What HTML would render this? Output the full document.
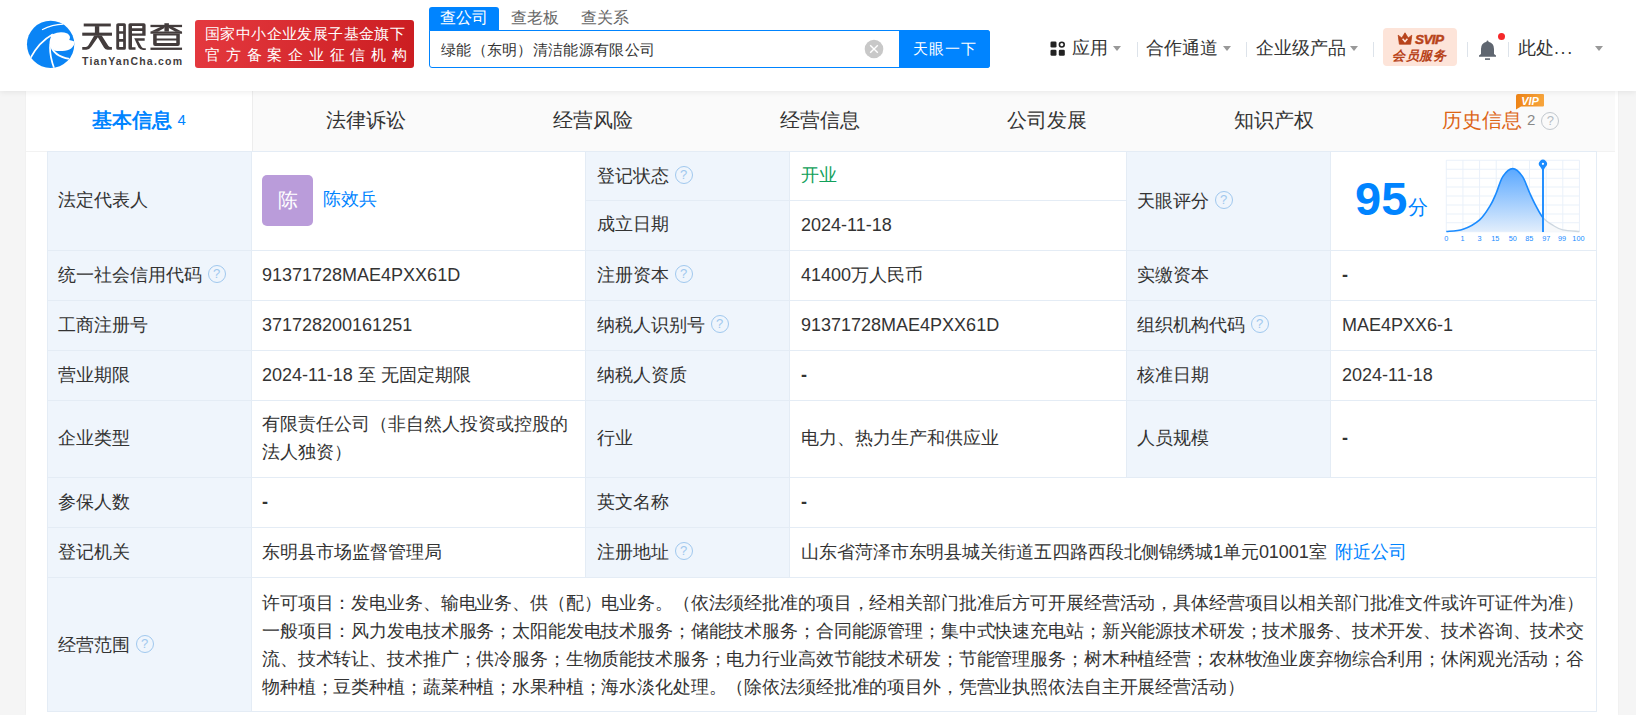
<!DOCTYPE html>
<html><head><meta charset="utf-8">
<style>
*{box-sizing:border-box;margin:0;padding:0}
html,body{width:1636px;height:715px;overflow:hidden;background:#f5f5f5;font-family:"Liberation Sans",sans-serif;color:#333}
.abs{position:absolute}
.t{white-space:nowrap}
#hdr{position:absolute;left:0;top:0;width:1636px;height:91px;background:#fff;box-shadow:0 1px 6px rgba(0,0,0,.08);z-index:5}
#cont{position:absolute;left:26px;top:91px;width:1592px;height:624px;background:#fff;box-shadow:0 0 2px rgba(0,0,0,.05)}
.tabs{position:absolute;left:0;top:0;width:1589px;height:61px;background:#fafafa;border-bottom:1px solid #f2f2f2}
.tab{position:absolute;top:0;height:60px;width:227px;text-align:center;font-size:20px;line-height:58px;color:#333}
.tab.act{background:#fff;border-left:none;width:226px;left:0;color:#0084ff;font-weight:bold}
.q{display:inline-block;width:18px;height:18px;border:1.6px solid #a0c8ee;border-radius:50%;font-size:13px;line-height:15px;text-align:center;color:#a0c8ee;vertical-align:middle;margin-left:5.5px;position:relative;top:-2px;font-weight:normal}
.caret{position:absolute;width:0;height:0;border-left:4.5px solid transparent;border-right:4.5px solid transparent;border-top:5px solid #999}
.div{position:absolute;width:1px;height:15px;background:#dde3ea;top:42px}
</style></head><body>
<div id="hdr">
  <!-- logo -->
  <svg class="abs" style="left:24px;top:16px" width="56" height="56" viewBox="0 0 715 715">
    <defs><clipPath id="lc"><circle cx="340" cy="362" r="302"/></clipPath></defs>
    <circle cx="340" cy="362" r="302" fill="#0a84f5"/>
    <g clip-path="url(#lc)" fill="none" stroke="#fff" stroke-width="22">
      <path d="M80,540 Q190,330 368,232"/>
      <path d="M230,175 Q360,110 505,105" stroke-width="16"/>
      <path d="M362,240 Q290,420 390,680"/>
      <path d="M338,360 Q370,510 580,548"/>
      <path fill="#fff" stroke="none" d="M365,232 Q470,185 555,225 Q605,260 578,305 Q620,312 650,330 C640,400 585,447 490,448 Q415,450 385,440 Q338,400 338,340 Q338,270 365,232 Z"/>
    </g>
  </svg>
  <svg class="abs" style="left:80px;top:20px" width="105" height="33" viewBox="0 0 1636 514">
<g fill="#433c3c">
<rect x="58" y="55" width="422" height="45"/>
<rect x="35" y="197" width="463" height="48"/>
<rect x="232" y="95" width="68" height="110"/>
<path d="M222,240 L298,240 L175,418 Q145,465 100,465 L35,465 L35,420 L92,420 Q115,420 132,395 Z"/>
<path d="M262,240 L338,240 L440,400 Q455,420 478,420 L497,420 L497,465 L430,465 Q395,465 375,432 Z"/>
<path fill-rule="evenodd" d="M595,50 L690,50 Q715,50 715,75 L715,440 Q715,465 690,465 L595,465 Q565,465 565,440 L565,75 Q565,50 595,50 Z M610,95 L672,95 L672,175 L610,175 Z M610,215 L672,215 L672,295 L610,295 Z M610,340 L672,340 L672,420 L610,420 Z"/>
<path fill-rule="evenodd" d="M780,50 L995,50 Q1022,50 1022,77 L1022,245 L810,245 L810,425 L865,425 L865,465 L780,465 Q755,465 755,440 L755,75 Q755,50 780,50 Z M810,92 L970,92 L970,128 L810,128 Z M810,170 L970,170 L970,210 L810,210 Z"/>
<path d="M845,283 L1008,283 L1008,322 L905,322 L958,415 Q975,440 1000,440 L1025,440 L1025,467 L985,467 Q935,467 912,430 Z"/>
<rect x="1098" y="75" width="492" height="36"/>
<path d="M1315,50 L1385,50 L1385,180 L1315,180 Z"/>
<path d="M1098,180 L1590,180 L1590,215 L1098,215 Z"/>
<path d="M1252,110 L1316,110 L1316,124 L1212,182 L1098,182 Z"/>
<path d="M1448,110 L1384,110 L1384,124 L1488,182 L1590,182 Z"/>
<path fill-rule="evenodd" d="M1140,215 L1555,215 L1555,375 Q1555,405 1525,405 L1170,405 Q1140,405 1140,375 Z M1195,240 L1500,240 L1500,290 L1195,290 Z M1195,320 L1500,320 L1500,360 L1195,360 Z"/>
<rect x="1098" y="430" width="492" height="36"/>
</g>
</svg>
  <div class="abs t" style="left:82px;top:55px;font-size:10.5px;line-height:12px;font-weight:bold;color:#433d3d;letter-spacing:1.2px">TianYanCha.com</div>
  <div class="abs" style="left:195px;top:20px;width:219px;height:48px;border-radius:3px;background:linear-gradient(100deg,#e4393f,#cb1d21);color:#fff">
    <div class="abs t" style="left:10px;top:4px;font-size:15px;line-height:20px;letter-spacing:0.4px">国家中小企业发展子基金旗下</div>
    <div class="abs t" style="left:10px;top:25px;font-size:15px;line-height:20px;letter-spacing:5.75px">官方备案企业征信机构</div>
  </div>
  <!-- search -->
  <div class="abs" style="left:429px;top:7px;width:70px;height:24px;background:#0084ff;border-radius:3px 3px 0 0;color:#fff;font-size:16px;line-height:22px;text-align:center;font-weight:500">查公司</div>
  <div class="abs t" style="left:511px;top:7px;font-size:16px;line-height:22px;color:#666">查老板</div>
  <div class="abs t" style="left:581px;top:7px;font-size:16px;line-height:22px;color:#666">查关系</div>
  <div class="abs" style="left:429px;top:30px;width:561px;height:38px;border:1px solid #0084ff;border-radius:0 3px 3px 3px;background:#fff">
    <div class="abs t" style="left:11px;top:1px;font-size:15px;line-height:36px;color:#333;letter-spacing:0.3px">绿能（东明）清洁能源有限公司</div>
    <svg class="abs" style="left:434px;top:7.5px" width="20" height="20" viewBox="0 0 20 20">
      <circle cx="10" cy="10" r="9.3" fill="#c8c8c8"/>
      <path d="M6.2,6.2 L13.8,13.8 M13.8,6.2 L6.2,13.8" stroke="#fff" stroke-width="1.4"/>
    </svg>
    <div class="abs" style="left:469px;top:-1px;width:91px;height:38px;background:#0084ff;border-radius:0 3px 3px 0;color:#fff;font-size:15px;line-height:37px;text-align:center;letter-spacing:0.8px;text-indent:0.8px">天眼一下</div>
  </div>
  <!-- right nav -->
  <svg class="abs" style="left:1050px;top:41px" width="16" height="16" viewBox="0 0 16 16">
    <rect x="0.5" y="0.5" width="6" height="6" rx="1.3" fill="#222"/>
    <circle cx="11.8" cy="3.6" r="2.4" fill="none" stroke="#222" stroke-width="1.6"/>
    <rect x="0.5" y="8.8" width="6" height="6" rx="1.3" fill="#222"/>
    <rect x="8.8" y="8.8" width="6" height="6" rx="1.3" fill="#222"/>
  </svg>
  <div class="abs t" style="left:1072px;top:36px;font-size:18px;line-height:24px;color:#333">应用</div>
  <div class="caret" style="left:1113px;top:46px"></div>
  <div class="div" style="left:1137px"></div>
  <div class="abs t" style="left:1146px;top:36px;font-size:18px;line-height:24px;color:#333">合作通道</div>
  <div class="caret" style="left:1223px;top:46px"></div>
  <div class="div" style="left:1246px"></div>
  <div class="abs t" style="left:1256px;top:36px;font-size:18px;line-height:24px;color:#333">企业级产品</div>
  <div class="caret" style="left:1350px;top:46px"></div>
  <div class="div" style="left:1373px"></div>
  <div class="abs" style="left:1383px;top:28px;width:74px;height:38px;border-radius:4px;background:#fde4d9;color:#b8431a">
    <svg class="abs" style="left:14px;top:4px" width="16" height="13" viewBox="0 0 16 13">
      <path d="M1.2,3.2 L4.8,6 L8,0.8 L11.2,6 L14.8,3.2 L13.6,12.2 L2.4,12.2 Z" fill="#b8431a" stroke="#b8431a" stroke-width="0.8" stroke-linejoin="round"/>
      <path d="M5.6,6.8 L8,9.6 L10.4,6.8" fill="none" stroke="#fde4d9" stroke-width="1.5"/>
    </svg>
    <div class="abs t" style="left:32px;top:3px;font-size:13.5px;line-height:17px;font-weight:bold;font-style:italic;letter-spacing:-0.6px;-webkit-text-stroke:0.5px #b8431a">SVIP</div>
    <div class="abs t" style="left:9px;top:19px;font-size:13px;line-height:17px;font-weight:bold;font-style:italic;letter-spacing:0.6px">会员服务</div>
  </div>
  <div class="div" style="left:1467px"></div>
  <svg class="abs" style="left:1478px;top:39px" width="20" height="22" viewBox="0 0 20 22">
    <path d="M9.5,1.5 Q10.5,1.5 10.5,2.8 Q16,4 16,10 L16,15 L18,16.5 L18,17.8 L1,17.8 L1,16.5 L3,15 L3,10 Q3,4 8.5,2.8 Q8.5,1.5 9.5,1.5 Z" fill="#5f6670"/>
    <rect x="7" y="19.3" width="5" height="1.6" fill="#5f6670"/>
  </svg>
  <div class="abs" style="left:1498px;top:33px;width:7px;height:7px;border-radius:50%;background:#f5282a"></div>
  <div class="div" style="left:1508px"></div>
  <div class="abs t" style="left:1518px;top:36px;font-size:18px;line-height:24px;color:#333">此处<span style="letter-spacing:1.6px">...</span></div>
  <div class="caret" style="left:1595px;top:46px"></div>
</div>
<div id="cont">
  <div class="tabs">
    <div class="tab act">基本信息 <span style="font-size:15px;font-weight:normal;position:relative;top:-2px">4</span></div>
    <div class="tab" style="left:226px;border-left:1px solid #ededed">法律诉讼</div>
    <div class="tab" style="left:453px">经营风险</div>
    <div class="tab" style="left:680px">经营信息</div>
    <div class="tab" style="left:907px">公司发展</div>
    <div class="tab" style="left:1134px">知识产权</div>
    <div class="tab" style="left:1361px;color:#dd6516">历史信息 <span style="font-size:15px;color:#888;position:relative;top:-2px">2</span><span class="q" style="border:1.7px solid #c2c8ce;color:#b5bcc3;margin-left:6px;top:-1px">?</span></div>
  </div>
  <svg class="abs" style="left:1490px;top:3px" width="29" height="18" viewBox="0 0 29 18">
    <defs><linearGradient id="vg" x1="0" x2="1"><stop offset="0" stop-color="#ee8417"/><stop offset="1" stop-color="#f7a53c"/></linearGradient></defs>
    <path d="M2,0 L27,0 Q28,0 28,1 L28,11.5 Q28,12.5 27,12.5 L5,12.5 L0,15.5 L0,2 Q0,0 2,0 Z" fill="url(#vg)"/>
    <text x="14" y="10.5" text-anchor="middle" font-family="Liberation Sans" font-size="11" font-weight="bold" font-style="italic" fill="#fff">VIP</text>
  </svg>
</div>
<div class="abs" style="left:47px;top:151px;width:204px;height:560px;background:#eff5fc"></div>
<div class="abs" style="left:585px;top:151px;width:204px;height:426px;background:#eff5fc"></div>
<div class="abs" style="left:1126px;top:151px;width:204px;height:326px;background:#eff5fc"></div>
<div class="abs" style="left:47px;top:151px;width:1px;height:561px;background:#e4ecf5"></div>
<div class="abs" style="left:251px;top:151px;width:1px;height:561px;background:#e4ecf5"></div>
<div class="abs" style="left:585px;top:151px;width:1px;height:427px;background:#e4ecf5"></div>
<div class="abs" style="left:789px;top:151px;width:1px;height:427px;background:#e4ecf5"></div>
<div class="abs" style="left:1126px;top:151px;width:1px;height:327px;background:#e4ecf5"></div>
<div class="abs" style="left:1330px;top:151px;width:1px;height:327px;background:#e4ecf5"></div>
<div class="abs" style="left:1596px;top:151px;width:1px;height:561px;background:#e4ecf5"></div>
<div class="abs" style="left:47px;top:151px;width:1550px;height:1px;background:#e4ecf5"></div>
<div class="abs" style="left:585px;top:200px;width:542px;height:1px;background:#e4ecf5"></div>
<div class="abs" style="left:47px;top:250px;width:1550px;height:1px;background:#e4ecf5"></div>
<div class="abs" style="left:47px;top:300px;width:1550px;height:1px;background:#e4ecf5"></div>
<div class="abs" style="left:47px;top:350px;width:1550px;height:1px;background:#e4ecf5"></div>
<div class="abs" style="left:47px;top:400px;width:1550px;height:1px;background:#e4ecf5"></div>
<div class="abs" style="left:47px;top:477px;width:1550px;height:1px;background:#e4ecf5"></div>
<div class="abs" style="left:47px;top:527px;width:1550px;height:1px;background:#e4ecf5"></div>
<div class="abs" style="left:47px;top:577px;width:1550px;height:1px;background:#e4ecf5"></div>
<div class="abs" style="left:47px;top:711px;width:1550px;height:1px;background:#e4ecf5"></div>
<div class="abs t" style="left:58px;top:185px;height:30px;line-height:30px;font-size:18px;">法定代表人</div>
<div class="abs t" style="left:597px;top:161px;height:30px;line-height:30px;font-size:18px;">登记状态<span class="q">?</span></div>
<div class="abs t" style="left:801px;top:160px;height:30px;line-height:30px;font-size:18px;color:#10a05a">开业</div>
<div class="abs t" style="left:597px;top:209px;height:30px;line-height:30px;font-size:18px;">成立日期</div>
<div class="abs t" style="left:801px;top:210px;height:30px;line-height:30px;font-size:18px;">2024-11-18</div>
<div class="abs t" style="left:1137px;top:186px;height:30px;line-height:30px;font-size:18px;">天眼评分<span class="q">?</span></div>
<div class="abs t" style="left:58px;top:260px;height:30px;line-height:30px;font-size:18px;">统一社会信用代码<span class="q">?</span></div>
<div class="abs t" style="left:262px;top:260px;height:30px;line-height:30px;font-size:18px;">91371728MAE4PXX61D</div>
<div class="abs t" style="left:597px;top:260px;height:30px;line-height:30px;font-size:18px;">注册资本<span class="q">?</span></div>
<div class="abs t" style="left:801px;top:260px;height:30px;line-height:30px;font-size:18px;">41400万人民币</div>
<div class="abs t" style="left:1137px;top:260px;height:30px;line-height:30px;font-size:18px;">实缴资本</div>
<div class="abs t" style="left:1342px;top:260px;height:30px;line-height:30px;font-size:18px;font-weight:bold;">-</div>
<div class="abs t" style="left:58px;top:310px;height:30px;line-height:30px;font-size:18px;">工商注册号</div>
<div class="abs t" style="left:262px;top:310px;height:30px;line-height:30px;font-size:18px;">371728200161251</div>
<div class="abs t" style="left:597px;top:310px;height:30px;line-height:30px;font-size:18px;">纳税人识别号<span class="q">?</span></div>
<div class="abs t" style="left:801px;top:310px;height:30px;line-height:30px;font-size:18px;">91371728MAE4PXX61D</div>
<div class="abs t" style="left:1137px;top:310px;height:30px;line-height:30px;font-size:18px;">组织机构代码<span class="q">?</span></div>
<div class="abs t" style="left:1342px;top:310px;height:30px;line-height:30px;font-size:18px;">MAE4PXX6-1</div>
<div class="abs t" style="left:58px;top:360px;height:30px;line-height:30px;font-size:18px;">营业期限</div>
<div class="abs t" style="left:262px;top:360px;height:30px;line-height:30px;font-size:18px;">2024-11-18 至 无固定期限</div>
<div class="abs t" style="left:597px;top:360px;height:30px;line-height:30px;font-size:18px;">纳税人资质</div>
<div class="abs t" style="left:801px;top:360px;height:30px;line-height:30px;font-size:18px;font-weight:bold;">-</div>
<div class="abs t" style="left:1137px;top:360px;height:30px;line-height:30px;font-size:18px;">核准日期</div>
<div class="abs t" style="left:1342px;top:360px;height:30px;line-height:30px;font-size:18px;">2024-11-18</div>
<div class="abs t" style="left:58px;top:423px;height:30px;line-height:30px;font-size:18px;">企业类型</div>
<div class="abs t" style="left:597px;top:423px;height:30px;line-height:30px;font-size:18px;">行业</div>
<div class="abs t" style="left:801px;top:423px;height:30px;line-height:30px;font-size:18px;">电力、热力生产和供应业</div>
<div class="abs t" style="left:1137px;top:423px;height:30px;line-height:30px;font-size:18px;">人员规模</div>
<div class="abs t" style="left:1342px;top:423px;height:30px;line-height:30px;font-size:18px;font-weight:bold;">-</div>
<div class="abs t" style="left:58px;top:487px;height:30px;line-height:30px;font-size:18px;">参保人数</div>
<div class="abs t" style="left:262px;top:487px;height:30px;line-height:30px;font-size:18px;font-weight:bold;">-</div>
<div class="abs t" style="left:597px;top:487px;height:30px;line-height:30px;font-size:18px;">英文名称</div>
<div class="abs t" style="left:801px;top:487px;height:30px;line-height:30px;font-size:18px;font-weight:bold;">-</div>
<div class="abs t" style="left:58px;top:537px;height:30px;line-height:30px;font-size:18px;">登记机关</div>
<div class="abs t" style="left:262px;top:537px;height:30px;line-height:30px;font-size:18px;">东明县市场监督管理局</div>
<div class="abs t" style="left:597px;top:537px;height:30px;line-height:30px;font-size:18px;">注册地址<span class="q">?</span></div>
<div class="abs t" style="left:801px;top:537px;height:30px;line-height:30px;font-size:18px;"><span style="letter-spacing:-0.08px">山东省菏泽市东明县城关街道五四路西段北侧锦绣城1单元01001室</span><span style="color:#0084ff;margin-left:8px">附近公司</span></div>
<div class="abs" style="left:262px;top:410px;width:316px;font-size:18px;line-height:28px;white-space:normal">有限责任公司（非自然人投资或控股的法人独资）</div>
<div class="abs t" style="left:58px;top:630px;height:30px;line-height:30px;font-size:18px;">经营范围<span class="q">?</span></div>
<div class="abs t" style="left:262px;top:589px;font-size:18px;line-height:28px;letter-spacing:-0.135px">许可项目：发电业务、输电业务、供（配）电业务。（依法须经批准的项目，经相关部门批准后方可开展经营活动，具体经营项目以相关部门批准文件或许可证件为准）</div>
<div class="abs t" style="left:262px;top:617px;font-size:18px;line-height:28px;letter-spacing:-0.135px">一般项目：风力发电技术服务；太阳能发电技术服务；储能技术服务；合同能源管理；集中式快速充电站；新兴能源技术研发；技术服务、技术开发、技术咨询、技术交</div>
<div class="abs t" style="left:262px;top:645px;font-size:18px;line-height:28px;letter-spacing:-0.135px">流、技术转让、技术推广；供冷服务；生物质能技术服务；电力行业高效节能技术研发；节能管理服务；树木种植经营；农林牧渔业废弃物综合利用；休闲观光活动；谷</div>
<div class="abs t" style="left:262px;top:673px;font-size:18px;line-height:28px;letter-spacing:-0.135px">物种植；豆类种植；蔬菜种植；水果种植；海水淡化处理。（除依法须经批准的项目外，凭营业执照依法自主开展经营活动）</div>
<div class="abs" style="left:262px;top:175px;width:51px;height:51px;border-radius:5px;background:#ba9cda;color:#fff;font-size:20px;line-height:51px;text-align:center">陈</div>
<div class="abs t" style="left:323px;top:184px;height:30px;line-height:30px;font-size:18px;color:#0084ff">陈效兵</div>
<svg class="abs" style="left:1440px;top:155px" width="150" height="90" viewBox="0 0 1192 715"><defs><linearGradient id="cg" x1="0" y1="0" x2="0" y2="1"><stop offset="0" stop-color="#5aa8ff"/><stop offset="1" stop-color="#e2eefc"/></linearGradient><clipPath id="cl"><rect x="0" y="0" width="820" height="715"/></clipPath><clipPath id="cr"><rect x="820" y="0" width="400" height="715"/></clipPath></defs><path d="M50.0,42 L50.0,610 M50,42 L1108,42 M182.2,42 L182.2,610 M50,113 L1108,113 M314.5,42 L314.5,610 M50,184 L1108,184 M446.8,42 L446.8,610 M50,255 L1108,255 M579.0,42 L579.0,610 M50,326 L1108,326 M711.2,42 L711.2,610 M50,397 L1108,397 M843.5,42 L843.5,610 M50,468 L1108,468 M975.8,42 L975.8,610 M50,539 L1108,539 M1108.0,42 L1108.0,610 M50,610 L1108,610" stroke="#eaf1fa" stroke-width="8" fill="none"/><path d="M50,608 C72.2,605.0 138.8,605.5 183,590 C227.2,574.5 278.8,546.7 315,515 C351.2,483.3 377.8,435.8 400,400 C422.2,364.2 431.3,338.3 448,300 C464.7,261.7 478.3,202.0 500,170 C521.7,138.0 552.2,108.0 578,108 C603.8,108.0 632.7,138.0 655,170 C677.3,202.0 694.5,261.7 712,300 C729.5,338.3 742.0,366.7 760,400 C778.0,433.3 796.7,473.3 820,500 C843.3,526.7 874.2,544.2 900,560 C925.8,575.8 940.3,587.0 975,595 C1009.7,603.0 1085.8,605.8 1108,608 L1108,610 L50,610 Z" fill="url(#cg)" clip-path="url(#cl)"/><path d="M50,608 C72.2,605.0 138.8,605.5 183,590 C227.2,574.5 278.8,546.7 315,515 C351.2,483.3 377.8,435.8 400,400 C422.2,364.2 431.3,338.3 448,300 C464.7,261.7 478.3,202.0 500,170 C521.7,138.0 552.2,108.0 578,108 C603.8,108.0 632.7,138.0 655,170 C677.3,202.0 694.5,261.7 712,300 C729.5,338.3 742.0,366.7 760,400 C778.0,433.3 796.7,473.3 820,500 C843.3,526.7 874.2,544.2 900,560 C925.8,575.8 940.3,587.0 975,595 C1009.7,603.0 1085.8,605.8 1108,608 L1108,610 L50,610 Z" fill="#f6f8fa" clip-path="url(#cr)"/><path d="M50,608 C72.2,605.0 138.8,605.5 183,590 C227.2,574.5 278.8,546.7 315,515 C351.2,483.3 377.8,435.8 400,400 C422.2,364.2 431.3,338.3 448,300 C464.7,261.7 478.3,202.0 500,170 C521.7,138.0 552.2,108.0 578,108 C603.8,108.0 632.7,138.0 655,170 C677.3,202.0 694.5,261.7 712,300 C729.5,338.3 742.0,366.7 760,400 C778.0,433.3 796.7,473.3 820,500 C843.3,526.7 874.2,544.2 900,560 C925.8,575.8 940.3,587.0 975,595 C1009.7,603.0 1085.8,605.8 1108,608" stroke="#1a8bff" stroke-width="13" fill="none" clip-path="url(#cl)"/><path d="M50,608 C72.2,605.0 138.8,605.5 183,590 C227.2,574.5 278.8,546.7 315,515 C351.2,483.3 377.8,435.8 400,400 C422.2,364.2 431.3,338.3 448,300 C464.7,261.7 478.3,202.0 500,170 C521.7,138.0 552.2,108.0 578,108 C603.8,108.0 632.7,138.0 655,170 C677.3,202.0 694.5,261.7 712,300 C729.5,338.3 742.0,366.7 760,400 C778.0,433.3 796.7,473.3 820,500 C843.3,526.7 874.2,544.2 900,560 C925.8,575.8 940.3,587.0 975,595 C1009.7,603.0 1085.8,605.8 1108,608" stroke="#cdd7e0" stroke-width="11" fill="none" clip-path="url(#cr)"/><rect x="811" y="100" width="15" height="512" fill="#1a8bff"/><path d="M818,128 L795,92 A32,32 0 1 1 841,92 Z" fill="#1a8bff"/><circle cx="818" cy="70" r="9" fill="#fff"/><text x="50" y="685" text-anchor="middle" font-family="Liberation Sans" font-size="58" fill="#1a8bff">0</text><text x="180" y="685" text-anchor="middle" font-family="Liberation Sans" font-size="58" fill="#1a8bff">1</text><text x="315" y="685" text-anchor="middle" font-family="Liberation Sans" font-size="58" fill="#1a8bff">3</text><text x="440" y="685" text-anchor="middle" font-family="Liberation Sans" font-size="58" fill="#1a8bff">15</text><text x="578" y="685" text-anchor="middle" font-family="Liberation Sans" font-size="58" fill="#1a8bff">50</text><text x="710" y="685" text-anchor="middle" font-family="Liberation Sans" font-size="58" fill="#1a8bff">85</text><text x="845" y="685" text-anchor="middle" font-family="Liberation Sans" font-size="58" fill="#1a8bff">97</text><text x="970" y="685" text-anchor="middle" font-family="Liberation Sans" font-size="58" fill="#1a8bff">99</text><text x="1100" y="685" text-anchor="middle" font-family="Liberation Sans" font-size="58" fill="#1a8bff">100</text></svg>
<div class="abs t" style="left:1355px;top:170px;font-size:47px;line-height:58px;font-weight:bold;color:#0084ff">95</div>
<div class="abs t" style="left:1408px;top:193px;font-size:20px;line-height:28px;color:#0084ff">分</div>
</body></html>
